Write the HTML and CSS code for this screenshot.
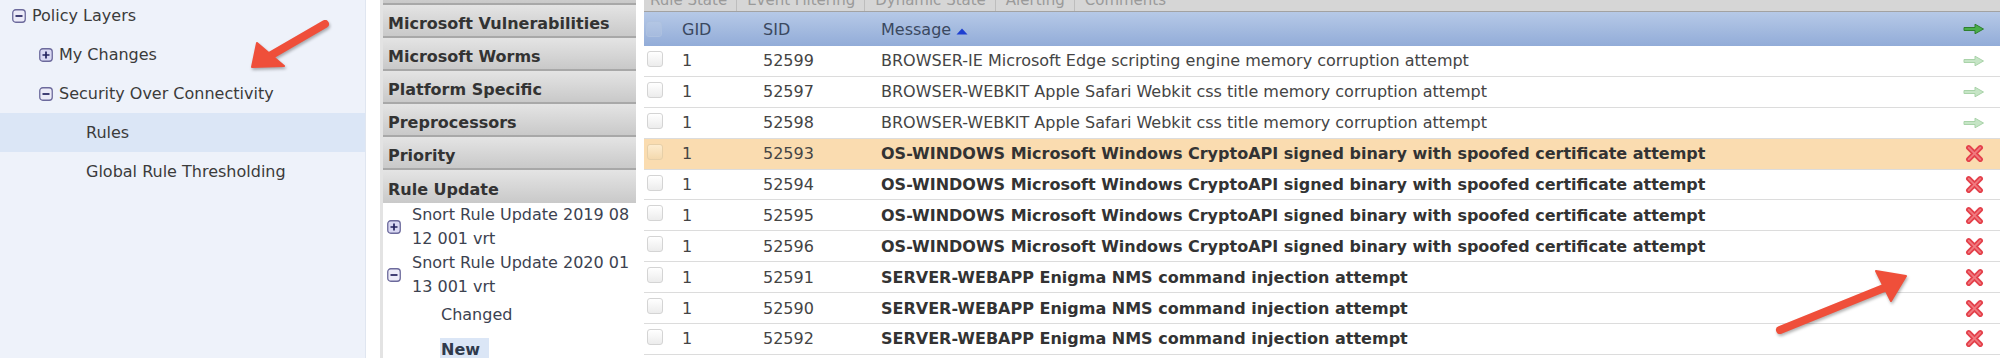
FILE: index.html
```html
<!DOCTYPE html>
<html>
<head>
<meta charset="utf-8">
<title>Rules</title>
<link rel="stylesheet" href="styles.css">
</head>
<body>
<div class="page">
  <aside class="policy">
    <ul class="tree">
      <li class="node lvl0"><svg class="tg" viewBox="0 0 14 14"><rect x="0.75" y="0.75" width="12.5" height="12.5" rx="3" class="tg-box"/><path d="M3.5 7h7" class="tg-sign"/></svg>Policy Layers</li>
      <li class="node lvl1"><svg class="tg" viewBox="0 0 14 14"><rect x="0.75" y="0.75" width="12.5" height="12.5" rx="3" class="tg-box plus"/><path d="M3.5 7h7M7 3.5v7" class="tg-sign"/></svg>My Changes</li>
      <li class="node lvl1"><svg class="tg" viewBox="0 0 14 14"><rect x="0.75" y="0.75" width="12.5" height="12.5" rx="3" class="tg-box"/><path d="M3.5 7h7" class="tg-sign"/></svg>Security Over Connectivity</li>
      <li class="node lvl2 sel">Rules</li>
      <li class="node lvl2">Global Rule Thresholding</li>
    </ul>
  </aside>

  <nav class="cats">
    <div class="cat"></div>
    <div class="cat">Microsoft Vulnerabilities</div>
    <div class="cat">Microsoft Worms</div>
    <div class="cat">Platform Specific</div>
    <div class="cat">Preprocessors</div>
    <div class="cat">Priority</div>
    <div class="cat last">Rule Update</div>
    <ul class="upd">
      <li class="grp"><svg class="tg" viewBox="0 0 14 14"><rect x="0.75" y="0.75" width="12.5" height="12.5" rx="3" class="tg-box plus"/><path d="M3.5 7h7M7 3.5v7" class="tg-sign"/></svg><span class="lbl">Snort Rule Update 2019 08 12 001 vrt</span></li>
      <li class="grp"><svg class="tg" viewBox="0 0 14 14"><rect x="0.75" y="0.75" width="12.5" height="12.5" rx="3" class="tg-box"/><path d="M3.5 7h7" class="tg-sign"/></svg><span class="lbl">Snort Rule Update 2020 01 13 001 vrt</span></li>
      <li class="leaf">Changed</li>
      <li class="leaf cur-item"><span class="cur">New</span></li>
    </ul>
  </nav>

  <main class="rules">
    <div class="tabs">
      <span class="tab first">Rule State</span>
      <span class="tab">Event Filtering</span>
      <span class="tab">Dynamic State</span>
      <span class="tab">Alerting</span>
      <span class="tab last">Comments</span>
    </div>
    <div class="row thead">
      <span class="cb hcb"></span>
      <span>GID</span>
      <span>SID</span>
      <span>Message<svg class="sort" viewBox="0 0 12 7"><path d="M6 0.5L11.5 6.5H0.5z"/></svg></span>
      <span class="act"><svg class="go" viewBox="0 0 22 12"><path d="M1 4.5h11V1.2l8.5 4.8-8.5 4.8V7.5H1z" class="go-on"/></svg></span>
    </div>

    <div class="row"><span class="cb"></span><span>1</span><span>52599</span><span>BROWSER-IE Microsoft Edge scripting engine memory corruption attempt</span><span class="act"><svg class="go" viewBox="0 0 22 12"><path d="M1 4.5h11V1.2l8.5 4.8-8.5 4.8V7.5H1z" class="go-off"/></svg></span></div>
    <div class="row"><span class="cb"></span><span>1</span><span>52597</span><span>BROWSER-WEBKIT Apple Safari Webkit css title memory corruption attempt</span><span class="act"><svg class="go" viewBox="0 0 22 12"><path d="M1 4.5h11V1.2l8.5 4.8-8.5 4.8V7.5H1z" class="go-off"/></svg></span></div>
    <div class="row"><span class="cb"></span><span>1</span><span>52598</span><span>BROWSER-WEBKIT Apple Safari Webkit css title memory corruption attempt</span><span class="act"><svg class="go" viewBox="0 0 22 12"><path d="M1 4.5h11V1.2l8.5 4.8-8.5 4.8V7.5H1z" class="go-off"/></svg></span></div>
    <div class="row hot"><span class="cb"></span><span>1</span><span>52593</span><span class="b">OS-WINDOWS Microsoft Windows CryptoAPI signed binary with spoofed certificate attempt</span><span class="act"><svg class="del" viewBox="0 0 18 18"><path d="M3.5 3.5L14.5 14.5M14.5 3.5L3.5 14.5" class="del-out"/><path d="M3.5 3.5L14.5 14.5M14.5 3.5L3.5 14.5" class="del-in"/></svg></span></div>
    <div class="row"><span class="cb"></span><span>1</span><span>52594</span><span class="b">OS-WINDOWS Microsoft Windows CryptoAPI signed binary with spoofed certificate attempt</span><span class="act"><svg class="del" viewBox="0 0 18 18"><path d="M3.5 3.5L14.5 14.5M14.5 3.5L3.5 14.5" class="del-out"/><path d="M3.5 3.5L14.5 14.5M14.5 3.5L3.5 14.5" class="del-in"/></svg></span></div>
    <div class="row"><span class="cb"></span><span>1</span><span>52595</span><span class="b">OS-WINDOWS Microsoft Windows CryptoAPI signed binary with spoofed certificate attempt</span><span class="act"><svg class="del" viewBox="0 0 18 18"><path d="M3.5 3.5L14.5 14.5M14.5 3.5L3.5 14.5" class="del-out"/><path d="M3.5 3.5L14.5 14.5M14.5 3.5L3.5 14.5" class="del-in"/></svg></span></div>
    <div class="row"><span class="cb"></span><span>1</span><span>52596</span><span class="b">OS-WINDOWS Microsoft Windows CryptoAPI signed binary with spoofed certificate attempt</span><span class="act"><svg class="del" viewBox="0 0 18 18"><path d="M3.5 3.5L14.5 14.5M14.5 3.5L3.5 14.5" class="del-out"/><path d="M3.5 3.5L14.5 14.5M14.5 3.5L3.5 14.5" class="del-in"/></svg></span></div>
    <div class="row"><span class="cb"></span><span>1</span><span>52591</span><span class="b">SERVER-WEBAPP Enigma NMS command injection attempt</span><span class="act"><svg class="del" viewBox="0 0 18 18"><path d="M3.5 3.5L14.5 14.5M14.5 3.5L3.5 14.5" class="del-out"/><path d="M3.5 3.5L14.5 14.5M14.5 3.5L3.5 14.5" class="del-in"/></svg></span></div>
    <div class="row"><span class="cb"></span><span>1</span><span>52590</span><span class="b">SERVER-WEBAPP Enigma NMS command injection attempt</span><span class="act"><svg class="del" viewBox="0 0 18 18"><path d="M3.5 3.5L14.5 14.5M14.5 3.5L3.5 14.5" class="del-out"/><path d="M3.5 3.5L14.5 14.5M14.5 3.5L3.5 14.5" class="del-in"/></svg></span></div>
    <div class="row"><span class="cb"></span><span>1</span><span>52592</span><span class="b">SERVER-WEBAPP Enigma NMS command injection attempt</span><span class="act"><svg class="del" viewBox="0 0 18 18"><path d="M3.5 3.5L14.5 14.5M14.5 3.5L3.5 14.5" class="del-out"/><path d="M3.5 3.5L14.5 14.5M14.5 3.5L3.5 14.5" class="del-in"/></svg></span></div>
  </main>

  <svg class="annot" viewBox="0 0 2000 358">
    <g class="arrow">
      <path d="M325 24L268 57" class="shaft"/>
      <path d="M252 67L257 43L284 66z" class="head"/>
      <path d="M1780 330L1884 288" class="shaft"/>
      <path d="M1906 276L1876 271L1891 301z" class="head"/>
    </g>
  </svg>
</div>
</body>
</html>
```

FILE: styles.css
```css
* { box-sizing: border-box; }

html, body {
  margin: 0;
  padding: 0;
  overflow: hidden;
  background: #ffffff;
}

body {
  font-family: "DejaVu Sans", Verdana, sans-serif;
  font-size: 16px;
  color: #3a3a3a;
}

.page {
  position: relative;
  display: flex;
  width: 2000px;
  height: 358px;
  overflow: hidden;
}

/* ---------- left policy tree ---------- */
.policy {
  flex: 0 0 366px;
  background: #eef2fa;
  border-right: 1px solid #e0e6f0;
}

.tree {
  list-style: none;
  margin: -4px 0 0;
  padding: 0;
}

.node {
  height: 39px;
  display: flex;
  align-items: center;
  gap: 6px;
  white-space: nowrap;
  color: #3b3b3b;
}

.lvl0 { padding-left: 12px; }
.lvl1 { padding-left: 39px; }
.lvl2 { padding-left: 86px; }
.sel { background: #dbe6f6; }

.tg {
  flex: 0 0 auto;
  display: block;
  width: 14px;
  height: 14px;
}

.tg-box {
  fill: #ecebf8;
  stroke: #6c6a9c;
  stroke-width: 1.3;
}

.tg-box.plus { fill: #d9d8f3; }

.tg-sign {
  stroke: #23225e;
  stroke-width: 1.7;
  fill: none;
}

/* ---------- middle categories ---------- */
.cats {
  flex: 0 0 256px;
  margin-left: 14px;
  border-left: 3px solid #e3e3e3;
}

.cat {
  height: 33px;
  padding: 5px 0 0 5px;
  display: flex;
  align-items: center;
  font-weight: bold;
  color: #333333;
  white-space: nowrap;
  background: linear-gradient(#e4e4e4, #c9c9c9);
  border-bottom: 2px solid #a8a8a8;
}

.cat:first-child { margin-top: -28px; }
.cat.last { border-bottom: none; }

.upd {
  list-style: none;
  margin: 0;
  padding: 0;
  color: #3c4250;
}

.grp {
  display: flex;
  align-items: center;
  gap: 11px;
  padding-left: 4px;
  line-height: 24px;
}

.lbl { width: 222px; }

.leaf {
  padding: 4px 0 4px 58px;
  line-height: 24px;
}

.cur-item { padding-top: 7px; }

.cur {
  display: inline-block;
  margin-left: -1px;
  padding: 2px 9px 2px 1px;
  line-height: 20px;
  font-weight: bold;
  color: #2f3a4c;
  background: #dbe6f6;
}

/* ---------- rules table ---------- */
.rules {
  flex: 1 1 auto;
  margin-left: 8px;
  display: flex;
  flex-direction: column;
}

.tabs {
  flex: 0 0 12px;
  display: flex;
  overflow: hidden;
  background: #d6d6d6;
  border-bottom: 1px solid #a2a2a2;
}

.tab {
  margin-top: -8px;
  padding: 0 9px 0 10px;
  font-size: 15px;
  line-height: 16px;
  color: #9a9a9a;
  border-right: 1px solid #bdbdbd;
  white-space: nowrap;
}

.tab.first { padding-left: 6px; }
.tab.last { border-right: none; }

.row {
  display: grid;
  grid-template-columns: 38px 81px 118px 1fr 52px;
  align-items: center;
  flex: 0 0 30.9px;
  border-bottom: 1px solid #dcdcdc;
  color: #444444;
  white-space: nowrap;
}

.row.thead {
  flex: 0 0 34px;
  border-bottom: none;
  color: #3a4860;
  background: linear-gradient(#b6c9e7, #92acd8);
}

.row.hot { background: #fadcb0; }

.b {
  font-weight: bold;
  color: #333333;
}

.cb {
  align-self: start;
  margin: 5px 0 0 3px;
  width: 16px;
  height: 16px;
  border: 1px solid #d4d4d4;
  border-radius: 3px;
  background: linear-gradient(#ffffff, #ececec);
}

.hot .cb {
  border-color: #e6cfa8;
  background: linear-gradient(#fdeccf, #f4d9ae);
}

.cb.hcb {
  margin: 9px 0 0 2px;
  border-color: #adc1e0;
  background: linear-gradient(#b3c6e4, #a6bbde);
}

.sort {
  display: inline-block;
  width: 12px;
  height: 7px;
  margin-left: 5px;
  vertical-align: baseline;
  fill: #1d3fd1;
}

.act {
  display: flex;
  justify-content: center;
  align-items: center;
}

.go {
  display: block;
  width: 22px;
  height: 12px;
}

.go-on {
  fill: #4aae4a;
  stroke: #2e7f2e;
  stroke-width: 1;
}

.go-off {
  fill: #c6e5c6;
  stroke: #a9d3a9;
  stroke-width: 1;
}

.del {
  display: block;
  width: 19px;
  height: 19px;
}

.del-out {
  stroke: #e4414b;
  stroke-width: 5;
  stroke-linecap: round;
  fill: none;
}

.del-in {
  stroke: #f07a80;
  stroke-width: 1.6;
  stroke-linecap: round;
  fill: none;
}

/* ---------- annotation arrows (overlay) ---------- */
.annot {
  position: absolute;
  left: 0;
  top: 0;
  width: 2000px;
  height: 358px;
  pointer-events: none;
  filter: drop-shadow(1px 2px 1.5px rgba(0, 0, 0, 0.3));
}

.shaft {
  stroke: #ef4f3a;
  stroke-width: 8;
  stroke-linecap: round;
  fill: none;
}

.head {
  fill: #ef4f3a;
  stroke: #ef4f3a;
  stroke-width: 2;
  stroke-linejoin: round;
}
```
